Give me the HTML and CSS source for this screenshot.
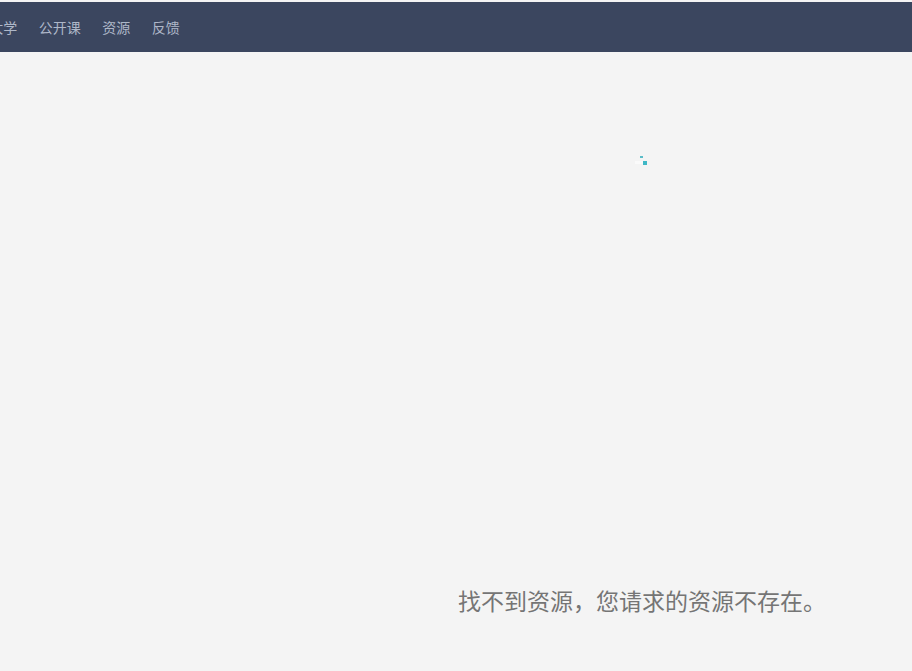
FILE: index.html
```html
<!DOCTYPE html>
<html>
  <head>
    <meta charset="utf-8" />
    <meta name="viewport" content="width=device-width, initial-scale=1" />
    <title>找不到资源</title>
    <link rel="stylesheet" href="styles.css">
  </head>
  <body>
    <div class="header">
      <ul class="nav">
        <li>大学</li>
        <li>公开课</li>
        <li>资源</li>
        <li>反馈</li>
      </ul>
    </div>
    <div class="content">
      <p class="message">找不到资源，您请求的资源不存在。</p>
    </div>
    <div class="spinner">
      <span class="dot_small"></span>
      <span class="dot_fade"></span>
      <span class="dot_big"></span>
    </div>
  </body>
</html>
```

FILE: styles.css
```css
html,
body {
  height: 100%;
}

body {
  margin: 0;
  padding-top: 2px;
  box-sizing: border-box;
  display: flex;
  flex-direction: column;
  overflow: hidden;
  background-color: #f4f4f4;
  font-family: "Liberation Sans", "Noto Sans CJK SC", sans-serif;
}

.header {
  height: 50px;
  flex: none;
  background-color: #3b465f;
}

.nav {
  display: flex;
  gap: 21.5px;
  margin: 0 0 0 -10.8px;
  padding: 0;
  list-style: none;
  line-height: 52px;
  font-size: 14px;
  color: #aeb7c8;
}

.content {
  flex: 1;
  display: flex;
  align-items: flex-end;
  padding: 0 0 49px 458px;
}

.message {
  margin: 0;
  font-size: 23px;
  line-height: 40px;
  color: #757575;
}

.spinner {
  position: absolute;
  top: 155px;
  left: 635px;
  width: 13px;
  height: 10px;
}

.dot_small {
  position: absolute;
  top: 1px;
  left: 5px;
  width: 3px;
  height: 2px;
  background: #5bbcc8;
}

.dot_fade {
  position: absolute;
  top: 6px;
  left: 0;
  width: 8px;
  height: 3px;
  background: #fafafa;
}

.dot_big {
  position: absolute;
  top: 6px;
  left: 8px;
  width: 4px;
  height: 4px;
  background: #3fb8c6;
}
```
